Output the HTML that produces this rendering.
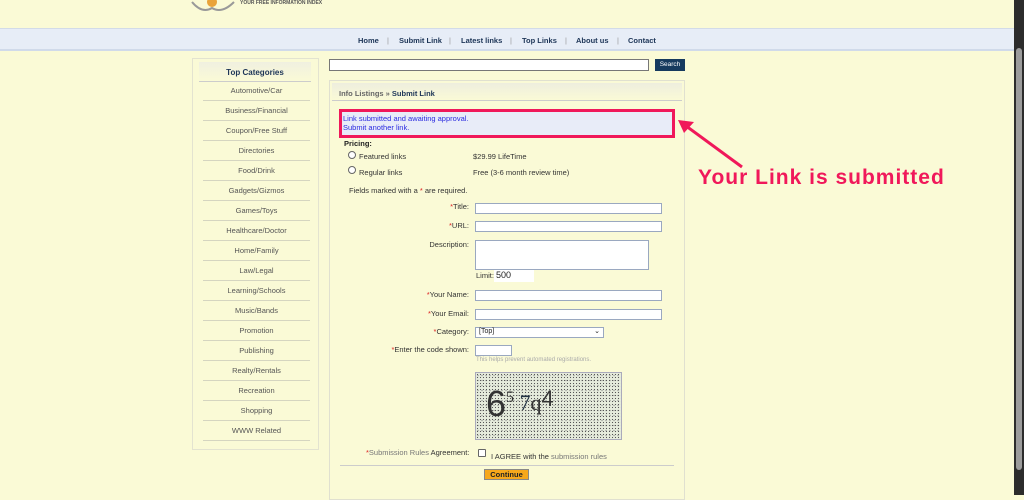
<!DOCTYPE html>
<html><head><meta charset="utf-8"><style>
*{margin:0;padding:0;box-sizing:border-box}
body{width:1024px;height:495px;overflow:hidden;background:#fafad6;font-family:"Liberation Sans",Arial,sans-serif;font-size:8px;color:#222;position:relative}
.a{position:absolute}
.nav{left:0;top:28px;width:1014px;height:23px;background:#e7edf7;border-top:1px solid #d2dbe8;border-bottom:2px solid #d0daea}
.nav span{position:absolute;top:7px;font-weight:bold;color:#1d3557;font-size:7.5px}
.nav i{position:absolute;top:7px;color:#999;font-style:normal;font-size:7.5px}
.side{left:192px;top:58px;width:127px;height:392px;border:1px solid #e3e3d0;background:#fafad6}
.side .h{position:absolute;left:6px;top:3px;width:112px;height:20px;background:linear-gradient(#f0f0e0,#fafad6);text-align:center;font-weight:bold;color:#1d3557;line-height:22px;border-bottom:1px solid #ccc}
.side div.it{position:absolute;left:10px;width:107px;height:20px;border-bottom:1px solid #d5d5c0;text-align:center;color:#555;line-height:20px;font-size:7.5px}
.main{left:329px;top:80px;width:356px;height:420px;border:1px solid #e0e0d0}
.lbl{position:absolute;text-align:right;width:140px;left:329px;color:#333;font-size:7.5px}
.lbl b{color:#d22;font-weight:normal}
.inp{position:absolute;background:#fff;border:1px solid #9aa8c0}
</style></head><body>
<svg class="a" style="left:190px;top:0" width="50" height="14"><path d="M2 2 Q12 14 22 8 Q32 14 44 2" stroke="#999" fill="none" stroke-width="2"/><circle cx="22" cy="2" r="5" fill="#e9a33a"/></svg>
<div class="a" style="left:240px;top:0;font-size:5px;font-weight:bold;color:#555">YOUR FREE INFORMATION INDEX</div>
<div class="a nav">
<span style="left:358px">Home</span><i style="left:387px">|</i>
<span style="left:399px">Submit Link</span><i style="left:449px">|</i>
<span style="left:461px">Latest links</span><i style="left:510px">|</i>
<span style="left:522px">Top Links</span><i style="left:565px">|</i>
<span style="left:576px">About us</span><i style="left:617px">|</i>
<span style="left:628px">Contact</span>
</div>
<div class="a" style="left:1014px;top:0;width:10px;height:495px;background:#2c2c2c"></div>
<div class="a" style="left:1016px;top:48px;width:6px;height:422px;background:#9c9c9c;border-radius:3px"></div>
<div class="a side"><div class="h">Top Categories</div>
<div class="it" style="top:22px">Automotive/Car</div>
<div class="it" style="top:42px">Business/Financial</div>
<div class="it" style="top:62px">Coupon/Free Stuff</div>
<div class="it" style="top:82px">Directories</div>
<div class="it" style="top:102px">Food/Drink</div>
<div class="it" style="top:122px">Gadgets/Gizmos</div>
<div class="it" style="top:142px">Games/Toys</div>
<div class="it" style="top:162px">Healthcare/Doctor</div>
<div class="it" style="top:182px">Home/Family</div>
<div class="it" style="top:202px">Law/Legal</div>
<div class="it" style="top:222px">Learning/Schools</div>
<div class="it" style="top:242px">Music/Bands</div>
<div class="it" style="top:262px">Promotion</div>
<div class="it" style="top:282px">Publishing</div>
<div class="it" style="top:302px">Realty/Rentals</div>
<div class="it" style="top:322px">Recreation</div>
<div class="it" style="top:342px">Shopping</div>
<div class="it" style="top:362px">WWW Related</div>
</div>
<div class="inp" style="left:329px;top:59px;width:320px;height:12px;border-color:#777"></div>
<div class="a" style="left:655px;top:59px;width:30px;height:12px;background:#163a5e;color:#fff;font-size:6.5px;text-align:center;line-height:12px">Search</div>
<div class="a main"></div>
<div class="a" style="left:332px;top:83px;width:350px;height:18px;background:linear-gradient(#eeeede,#fafad6);border-bottom:1px solid #ccc"></div>
<div class="a" style="left:339px;top:89px;color:#666;font-weight:bold;font-size:7.5px">Info Listings » <span style="color:#1d3557">Submit Link</span></div>
<div class="a" style="left:339px;top:109px;width:336px;height:29px;background:#e8ecf8;border:3px solid #f0185a"></div>
<div class="a" style="left:343px;top:114px;color:#2a2ae0;font-size:7.5px;line-height:9px">Link submitted and awaiting approval.<br>Submit another link.</div>
<div class="a" style="left:344px;top:139px;font-weight:bold;font-size:7.5px">Pricing:</div>
<div class="a" style="left:348px;top:151px;width:8px;height:8px;border:1px solid #666;border-radius:50%;background:#fff"></div>
<div class="a" style="left:359px;top:152px;font-size:7.5px;color:#333">Featured links</div>
<div class="a" style="left:473px;top:152px;font-size:7.5px;color:#333">$29.99 LifeTime</div>
<div class="a" style="left:348px;top:166px;width:8px;height:8px;border:1px solid #666;border-radius:50%;background:#fff"></div>
<div class="a" style="left:359px;top:168px;font-size:7.5px;color:#333">Regular links</div>
<div class="a" style="left:473px;top:168px;font-size:7.5px;color:#333">Free (3-6 month review time)</div>
<div class="a" style="left:349px;top:186px;font-size:7.5px;color:#333">Fields marked with a <b style="color:#d22;font-weight:normal">*</b> are required.</div>
<div class="lbl" style="top:202px"><b>*</b>Title:</div><div class="inp" style="left:475px;top:203px;width:187px;height:11px"></div>
<div class="lbl" style="top:221px"><b>*</b>URL:</div><div class="inp" style="left:475px;top:221px;width:187px;height:11px"></div>
<div class="lbl" style="top:240px">Description:</div><div class="inp" style="left:475px;top:240px;width:174px;height:30px"></div>
<div class="a" style="left:476px;top:271px;font-size:7.5px;color:#333">Limit: </div><div class="a" style="left:494px;top:270px;width:40px;height:12px;background:#fff;font-size:9px;padding-left:2px">500</div>
<div class="lbl" style="top:290px"><b>*</b>Your Name:</div><div class="inp" style="left:475px;top:290px;width:187px;height:11px"></div>
<div class="lbl" style="top:309px"><b>*</b>Your Email:</div><div class="inp" style="left:475px;top:309px;width:187px;height:11px"></div>
<div class="lbl" style="top:327px"><b>*</b>Category:</div><div class="inp" style="left:475px;top:327px;width:129px;height:11px;font-size:7px;padding-left:3px">[Top]<span style="position:absolute;right:3px;top:-1px;font-size:7px">⌄</span></div>
<div class="lbl" style="top:345px"><b>*</b>Enter the code shown:</div><div class="inp" style="left:475px;top:345px;width:37px;height:11px"></div>
<div class="a" style="left:476px;top:357px;font-size:6px;color:#aaa">This helps prevent automated registrations.</div>
<div class="a" style="left:475px;top:372px;width:147px;height:68px;background:#e6ecdc;border:1px solid #aab;background-image:radial-gradient(#555 0.6px,transparent 0.8px),radial-gradient(#888 0.5px,transparent 0.7px);background-size:3px 3px,4px 5px"></div>
<div class="a" style="left:486px;top:378px;font-size:36px;color:#333;line-height:40px">6<span style="font-family:'Liberation Serif',serif;font-size:16px;vertical-align:14px">5</span><span style="font-family:'Liberation Serif',serif;font-size:22px;color:#234;vertical-align:6px"> 7</span><span style="font-family:'Liberation Serif',serif;font-size:22px;vertical-align:6px">q</span><span style="font-size:22px;vertical-align:10px">4</span></div>
<div class="a" style="left:366px;top:448px;font-size:7.5px;color:#777"><b style="color:#d22;font-weight:normal">*</b>Submission Rules <span style="color:#333">Agreement:</span></div>
<div class="a" style="left:478px;top:449px;width:8px;height:8px;border:1px solid #666;background:#fff;border-radius:1px"></div>
<div class="a" style="left:491px;top:452px;font-size:7.5px;color:#333">I AGREE with the <span style="color:#777">submission rules</span></div>
<div class="a" style="left:340px;top:465px;width:334px;height:1px;background:#ccc"></div>
<div class="a" style="left:484px;top:469px;width:45px;height:11px;background:#f7a81b;border:1px solid #888;font-weight:bold;font-size:7.5px;text-align:center;line-height:10px">Continue</div>
<svg class="a" style="left:672px;top:115px" width="80" height="60"><line x1="70" y1="52" x2="10" y2="8" stroke="#f0185a" stroke-width="3"/><path d="M6 5 L22 7 L12 18 Z" fill="#f0185a"/></svg>
<div class="a" style="left:698px;top:166px;font-size:21px;letter-spacing:1px;font-weight:bold;color:#f0185a">Your Link is submitted</div>
</body></html>
